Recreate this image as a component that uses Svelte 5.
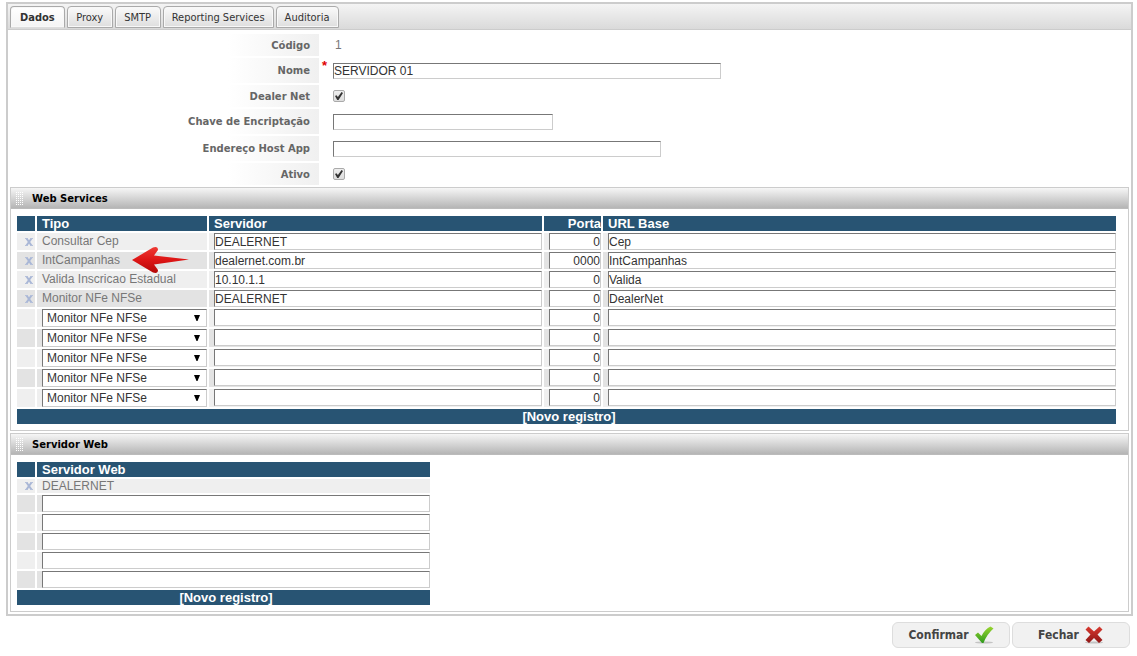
<script lang="ts">
	const tabs = ['Dados', 'Proxy', 'SMTP', 'Reporting Services', 'Auditoria'];
	let activeTab = $state('Dados');

	let server = $state({
		nome: 'SERVIDOR 01',
		dealerNet: true,
		chave: '',
		hostApp: '',
		ativo: true,
	});

	const tipos = ['Monitor NFe NFSe', 'Consultar Cep', 'IntCampanhas', 'Valida Inscricao Estadual'];

	let services = $state([
		{ tipo: 'Consultar Cep', servidor: 'DEALERNET', porta: '0', url: 'Cep' },
		{ tipo: 'IntCampanhas', servidor: 'dealernet.com.br', porta: '0000', url: 'IntCampanhas' },
		{ tipo: 'Valida Inscricao Estadual', servidor: '10.10.1.1', porta: '0', url: 'Valida' },
		{ tipo: 'Monitor NFe NFSe', servidor: 'DEALERNET', porta: '0', url: 'DealerNet' },
	]);

	const emptyService = () => ({ tipo: tipos[0], servidor: '', porta: '0', url: '' });
	let newServices = $state(Array.from({ length: 5 }, emptyService));

	let webServers = $state(['DEALERNET']);
	let newWebServers = $state(['', '', '', '', '']);

	function addService(event: MouseEvent) {
		event.preventDefault();
		newServices.push(emptyService());
	}

	function addWebServer(event: MouseEvent) {
		event.preventDefault();
		newWebServers.push('');
	}
</script>

{#snippet deleteIcon()}
	<svg width="8" height="8" viewBox="0 0 8 8" aria-hidden="true">
		<path d="M1.5 0.5 L6.5 7.5 M6.5 0.5 L1.5 7.5" stroke="#a9b7d6" stroke-width="2" />
		<path d="M0 0.5h3M5 0.5h3M0 7.5h3M5 7.5h3" stroke="#b5c0da" stroke-width="1" />
	</svg>
{/snippet}

{#snippet grip()}
	<svg class="grip" width="8" height="13" viewBox="0 0 8 13" aria-hidden="true">
		{#each [0, 2, 4, 6, 8, 10, 12] as y (y)}
			{#each [0, 2, 4, 6] as x (x)}
				<rect {x} {y} width="1" height="1" fill="#fff" />
			{/each}
		{/each}
	</svg>
{/snippet}

<div class="page">
	<div class="panel">
		<div class="tabs" role="tablist">
			{#each tabs as tab (tab)}
				<button
					type="button"
					role="tab"
					class="tab"
					class:active={activeTab === tab}
					aria-selected={activeTab === tab}
					onclick={() => (activeTab = tab)}>{tab}</button
				>
			{/each}
		</div>

		<div class="form">
			<div class="row">
				<span class="label">Código</span>
				<span class="mark"></span>
				<span class="readonly">1</span>
			</div>
			<div class="row tall">
				<label class="label" for="nome">Nome</label>
				<span class="mark">*</span>
				<input id="nome" class="text nome" type="text" bind:value={server.nome} />
			</div>
			<div class="row">
				<label class="label" for="dealer-net">Dealer Net</label>
				<span class="mark"></span>
				<input id="dealer-net" class="check" type="checkbox" bind:checked={server.dealerNet} />
			</div>
			<div class="row tall">
				<label class="label" for="chave">Chave de Encriptação</label>
				<span class="mark"></span>
				<input id="chave" class="text chave" type="text" bind:value={server.chave} />
			</div>
			<div class="row tall">
				<label class="label" for="host-app">Endereço Host App</label>
				<span class="mark"></span>
				<input id="host-app" class="text host" type="text" bind:value={server.hostApp} />
			</div>
			<div class="row">
				<label class="label" for="ativo">Ativo</label>
				<span class="mark"></span>
				<input id="ativo" class="check" type="checkbox" bind:checked={server.ativo} />
			</div>
		</div>

		<section class="group">
			<h2>{@render grip()}Web Services</h2>
			<div class="group-body">
				<table class="services">
					<colgroup>
						<col class="col-delete" />
						<col class="col-tipo" />
						<col class="col-servidor" />
						<col class="col-porta" />
						<col />
					</colgroup>
					<thead>
						<tr>
							<th></th>
							<th>Tipo</th>
							<th>Servidor</th>
							<th class="number">Porta</th>
							<th>URL Base</th>
						</tr>
					</thead>
					<tbody>
						{#each services as service, i (service)}
							<tr>
								<td class="delete">
									<button
										type="button"
										aria-label="Excluir {service.tipo}"
										onclick={() => services.splice(i, 1)}>{@render deleteIcon()}</button
									>
								</td>
								<td class="name">
									{service.tipo}
									{#if service.tipo === 'IntCampanhas'}
										<svg class="arrow" width="60" height="28" viewBox="0 0 60 28" aria-hidden="true">
											<defs>
												<linearGradient id="arrow-fill" x1="0" y1="0" x2="0" y2="1">
													<stop offset="0" stop-color="#ee3a34" />
													<stop offset="0.5" stop-color="#dd1515" />
													<stop offset="1" stop-color="#b30808" />
												</linearGradient>
											</defs>
											<path
												d="M1 14 L22 1.5 Q27 0 27 4 L23 9.5 L58 13.5 L23 18.5 L27 24 Q27 28 22 26.5 Z"
												fill="url(#arrow-fill)"
											/>
										</svg>
									{/if}
								</td>
								<td><input type="text" aria-label="Servidor" bind:value={service.servidor} /></td>
								<td><input class="number" type="text" aria-label="Porta" bind:value={service.porta} /></td>
								<td><input type="text" aria-label="URL Base" bind:value={service.url} /></td>
							</tr>
						{/each}
						{#each newServices as service (service)}
							<tr class="new">
								<td></td>
								<td>
									<div class="select">
										<select aria-label="Tipo" bind:value={service.tipo}>
											{#each tipos as tipo (tipo)}
												<option>{tipo}</option>
											{/each}
										</select>
										<svg width="6" height="6" viewBox="0 0 6 6" aria-hidden="true">
											<path d="M0 0h6L3.5 6h-1z" />
										</svg>
									</div>
								</td>
								<td><input type="text" aria-label="Servidor" bind:value={service.servidor} /></td>
								<td><input class="number" type="text" aria-label="Porta" bind:value={service.porta} /></td>
								<td><input type="text" aria-label="URL Base" bind:value={service.url} /></td>
							</tr>
						{/each}
					</tbody>
					<tfoot>
						<tr>
							<td colspan="5"><a href="#novo-servico" onclick={addService}>[Novo registro]</a></td>
						</tr>
					</tfoot>
				</table>
			</div>
		</section>

		<section class="group">
			<h2>{@render grip()}Servidor Web</h2>
			<div class="group-body">
				<table class="web-servers">
					<colgroup>
						<col class="col-delete" />
						<col />
					</colgroup>
					<thead>
						<tr>
							<th></th>
							<th>Servidor Web</th>
						</tr>
					</thead>
					<tbody>
						{#each webServers as name, i (name)}
							<tr class="short">
								<td class="delete">
									<button
										type="button"
										aria-label="Excluir {name}"
										onclick={() => webServers.splice(i, 1)}>{@render deleteIcon()}</button
									>
								</td>
								<td class="name">{name}</td>
							</tr>
						{/each}
						{#each newWebServers as _, i (i)}
							<tr>
								<td></td>
								<td><input type="text" aria-label="Servidor Web" bind:value={newWebServers[i]} /></td>
							</tr>
						{/each}
					</tbody>
					<tfoot>
						<tr>
							<td colspan="2"><a href="#novo-servidor" onclick={addWebServer}>[Novo registro]</a></td>
						</tr>
					</tfoot>
				</table>
			</div>
		</section>
	</div>

	<div class="actions">
		<button type="button">
			Confirmar
			<svg width="20" height="18" viewBox="0 0 20 18" aria-hidden="true">
				<defs>
					<linearGradient id="check-fill" x1="0" y1="0" x2="0" y2="1">
						<stop offset="0" stop-color="#9ad62f" />
						<stop offset="1" stop-color="#2f9a1d" />
					</linearGradient>
				</defs>
				<ellipse cx="10" cy="16.5" rx="9" ry="1" fill="#c4c4c4" />
				<path d="M1 9 L4 6.5 L7.5 10 Q11 3 16.5 0.5 L19.5 2.5 Q13 8 9.5 17 L8 17 Z" fill="url(#check-fill)" />
			</svg>
		</button>
		<button type="button">
			Fechar
			<svg width="20" height="18" viewBox="0 0 20 18" aria-hidden="true">
				<defs>
					<linearGradient id="cross-fill" x1="0" y1="0" x2="0" y2="1">
						<stop offset="0" stop-color="#d93a30" />
						<stop offset="1" stop-color="#8f1616" />
					</linearGradient>
				</defs>
				<ellipse cx="10" cy="16.5" rx="9" ry="1" fill="#c4c4c4" />
				<path
					d="M4.5 0.5 L10 5.5 L15.5 0.5 L18.5 3.5 L13.5 8.5 L18.5 14 L15 17 L10 12 L5 17 L1.5 14 L6.5 8.5 L1.5 3.5 Z"
					fill="url(#cross-fill)"
				/>
			</svg>
		</button>
	</div>
</div>

<style>
	:global(body) {
		margin: 0;
		background: #fff;
	}

	.page {
		padding: 2px 4px 8px 6px;
		font-family: 'Liberation Sans', Arial, sans-serif;
		font-size: 12px;
		color: #333;
	}

	.panel {
		border: 2px solid #ccc;
	}

	.tabs {
		display: flex;
		gap: 2px;
		padding: 2px 2px 0;
		height: 23px;
		border-bottom: 1px solid #ccc;
		background: linear-gradient(#f4f4f4, #dadada);
	}

	.tab {
		box-sizing: border-box;
		min-width: 46px;
		height: 22px;
		padding: 0 8px;
		border: 1px solid #aaa;
		border-radius: 4px 4px 0 0;
		background: linear-gradient(#fafafa, #dedede);
		box-shadow: inset 0 0 0 1px #f8f8f8;
		font-family: 'DejaVu Sans Condensed', Tahoma, sans-serif;
		font-size: 11px;
		color: #333;
		cursor: pointer;
	}

	.tab.active {
		padding: 0 9px;
		border-bottom-color: #ddd;
		background: linear-gradient(#fff, #f4f4f4);
		font-weight: bold;
	}

	.form {
		display: flex;
		flex-direction: column;
		gap: 2px;
		padding: 4px 0 2px;
	}

	.row {
		display: flex;
		align-items: center;
		min-height: 22px;
	}

	.row.tall {
		min-height: 25px;
	}

	.label {
		box-sizing: border-box;
		align-self: stretch;
		display: flex;
		align-items: center;
		justify-content: flex-end;
		width: 311px;
		padding-right: 9px;
		background: linear-gradient(to right, #fff 220px, #f0f0f0);
		font-family: 'DejaVu Sans', Verdana, sans-serif;
		font-size: 10px;
		font-weight: bold;
		color: #666;
	}

	.mark {
		align-self: flex-start;
		width: 11px;
		padding-left: 3px;
		font-size: 13px;
		font-weight: bold;
		line-height: 16px;
		color: #e00000;
	}

	.readonly {
		padding-left: 2px;
		color: #777;
	}

	input[type='text'] {
		box-sizing: border-box;
		display: block;
		height: 16px;
		padding: 0;
		border: 1px solid #ccc;
		border-top-color: #777;
		border-left-color: #777;
		border-radius: 0;
		background: #fff;
		font: inherit;
		color: #333;
		outline: none;
	}

	.nome {
		width: 388px;
	}

	.chave {
		width: 220px;
	}

	.host {
		width: 328px;
	}

	.check {
		appearance: none;
		width: 12px;
		height: 12px;
		margin: 0;
		border: 1px solid #aaa;
		border-radius: 2px;
		box-sizing: border-box;
		background: linear-gradient(#eee, #ddd);
		display: grid;
		place-content: center;
	}

	.check:checked::before {
		content: '';
		width: 8px;
		height: 8px;
		background: #333;
		clip-path: polygon(0 50%, 18% 40%, 36% 62%, 82% 0, 100% 14%, 44% 100%, 28% 100%);
	}

	.group {
		margin: 0 2px 2px;
		border: 1px solid #ccc;
	}

	h2 {
		display: flex;
		align-items: center;
		gap: 8px;
		height: 20px;
		margin: 0;
		padding-left: 5px;
		border-bottom: 1px solid #bbb;
		background: linear-gradient(#f6f6f6, #b5b5b5);
		font-family: 'DejaVu Sans', Verdana, sans-serif;
		font-size: 10px;
		font-weight: bold;
		color: #000;
	}

	.group-body {
		padding: 5px 10px 4px 4px;
	}

	table {
		width: 100%;
		table-layout: fixed;
		border-spacing: 2px;
	}

	.web-servers {
		width: 417px;
	}

	.col-delete {
		width: 18px;
	}

	.col-tipo {
		width: 170px;
	}

	.col-servidor {
		width: 333px;
	}

	.col-porta {
		width: 57px;
	}

	th,
	td {
		height: 17px;
		padding: 0 0 0 5px;
		line-height: 15px;
		text-align: left;
	}

	th,
	tfoot td {
		height: 15px;
		background: #285473;
		color: #fff;
		font-size: 13px;
		font-weight: bold;
	}

	tfoot td {
		text-align: center;
	}

	tfoot a {
		color: inherit;
		text-decoration: none;
	}

	tbody td {
		background: #efefef;
	}

	tbody tr:nth-child(even) td {
		background: #e3e3e3;
	}

	tbody input[type='text'] {
		width: 100%;
		height: 17px;
	}

	.new td {
		height: 18px;
		vertical-align: top;
	}

	.short td {
		height: 14px;
		line-height: 14px;
	}

	.number,
	input[type='text'].number {
		text-align: right;
	}

	.name {
		position: relative;
		color: #777;
	}

	.delete {
		padding-left: 8px;
	}

	.delete button {
		display: flex;
		padding: 0;
		border: none;
		background: none;
		cursor: pointer;
	}

	.arrow {
		position: absolute;
		left: 94px;
		top: -6px;
		z-index: 1;
	}

	.select {
		display: flex;
		align-items: center;
		box-sizing: border-box;
		height: 18px;
		padding-right: 6px;
		border: 1px solid #ccc;
		border-top-color: #777;
		border-left-color: #777;
		background: #fff;
	}

	select {
		appearance: none;
		flex: 1;
		min-width: 0;
		height: 16px;
		padding: 0 0 0 4px;
		border: none;
		background: none;
		font: inherit;
		line-height: 16px;
		color: #333;
		outline: none;
	}

	.actions {
		display: flex;
		justify-content: flex-end;
		gap: 2px;
		padding: 6px 3px 0 0;
	}

	.actions button {
		display: flex;
		align-items: center;
		justify-content: center;
		gap: 5px;
		box-sizing: border-box;
		width: 118px;
		height: 26px;
		padding: 0;
		border: 1px solid #ddd;
		border-radius: 6px;
		background: #f1f1f1;
		font-family: 'DejaVu Sans Condensed', Tahoma, sans-serif;
		font-size: 12px;
		font-weight: bold;
		color: #444;
		cursor: pointer;
	}
</style>
